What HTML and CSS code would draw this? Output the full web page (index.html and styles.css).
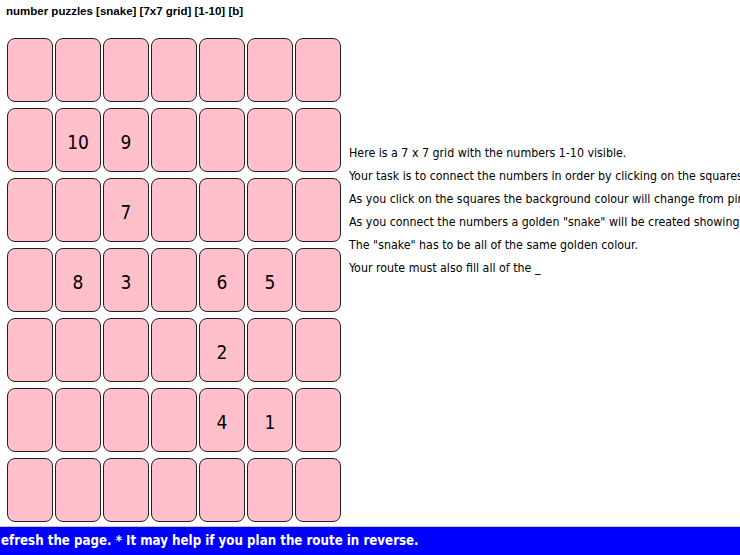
FILE: index.html
```html
<!DOCTYPE html>
<html>
<head>
<meta charset="utf-8">
<title>number puzzles [snake]</title>
<link rel="stylesheet" href="styles.css">
</head>
<body>
<div class="page">
  <h1 class="title">number puzzles [snake] [7x7 grid] [1-10] [b]</h1>
  <div class="main">
    <div class="grid">
      <div class="cell"></div><div class="cell"></div><div class="cell"></div><div class="cell"></div><div class="cell"></div><div class="cell"></div><div class="cell"></div>
      <div class="cell"></div><div class="cell">10</div><div class="cell">9</div><div class="cell"></div><div class="cell"></div><div class="cell"></div><div class="cell"></div>
      <div class="cell"></div><div class="cell"></div><div class="cell">7</div><div class="cell"></div><div class="cell"></div><div class="cell"></div><div class="cell"></div>
      <div class="cell"></div><div class="cell">8</div><div class="cell">3</div><div class="cell"></div><div class="cell">6</div><div class="cell">5</div><div class="cell"></div>
      <div class="cell"></div><div class="cell"></div><div class="cell"></div><div class="cell"></div><div class="cell">2</div><div class="cell"></div><div class="cell"></div>
      <div class="cell"></div><div class="cell"></div><div class="cell"></div><div class="cell"></div><div class="cell">4</div><div class="cell">1</div><div class="cell"></div>
      <div class="cell"></div><div class="cell"></div><div class="cell"></div><div class="cell"></div><div class="cell"></div><div class="cell"></div><div class="cell"></div>
    </div>
    <div class="info">
      <p>Here is a 7 x 7 grid with the numbers 1-10 visible.</p>
      <p>Your task is to connect the numbers in order by clicking on the squares.</p>
      <p>As you click on the squares the background colour will change from pink to gold.</p>
      <p>As you connect the numbers a golden "snake" will be created showing your route.</p>
      <p>The "snake" has to be all of the same golden colour.</p>
      <p>Your route must also fill all of the _</p>
    </div>
  </div>
  <div class="ticker"><span class="ticker-text">efresh the page. * It may help if you plan the route in reverse.</span></div>
</div>
</body>
</html>
```
FILE: styles.css
```css
html, body {
  margin: 0;
  padding: 0;
  background: #ffffff;
}
.page {
  width: 740px;
  height: 555px;
  overflow: hidden;
  font-family: "DejaVu Sans Condensed", "DejaVu Sans", sans-serif;
  color: #000;
}
.title {
  margin: 0;
  padding: 4px 0 0 6px;
  height: 34px;
  box-sizing: border-box;
  font-family: "Liberation Sans", Arial, sans-serif;
  font-size: 11.5px;
  font-weight: bold;
  line-height: 14px;
}
.main {
  display: flex;
  align-items: flex-start;
  padding-left: 7px;
  height: 492px;
}
.grid {
  display: grid;
  grid-template-columns: repeat(7, 46px);
  grid-auto-rows: 64px;
  column-gap: 2px;
  row-gap: 6px;
  padding-top: 4px;
}
.cell {
  background: #ffc0cb;
  border: 1.5px solid #222;
  border-radius: 8px;
  box-sizing: border-box;
  display: flex;
  align-items: center;
  justify-content: center;
  padding-top: 3px;
  font-size: 19px;
}
.info {
  margin-left: 8px;
  padding-top: 108px;
  white-space: nowrap;
  font-size: 12.3px;
}
.info p {
  margin: 0;
  line-height: 23px;
}
.ticker {
  border-top: 1px solid #c8c8c8;
  background: #0000ff;
  height: 30px;
  overflow: hidden;
  white-space: nowrap;
}
.ticker-text {
  display: block;
  color: #fff;
  font-family: "DejaVu Sans Condensed", "DejaVu Sans", sans-serif;
  font-weight: bold;
  font-size: 13.2px;
  line-height: 28px;
  padding-left: 1px;
}
```
